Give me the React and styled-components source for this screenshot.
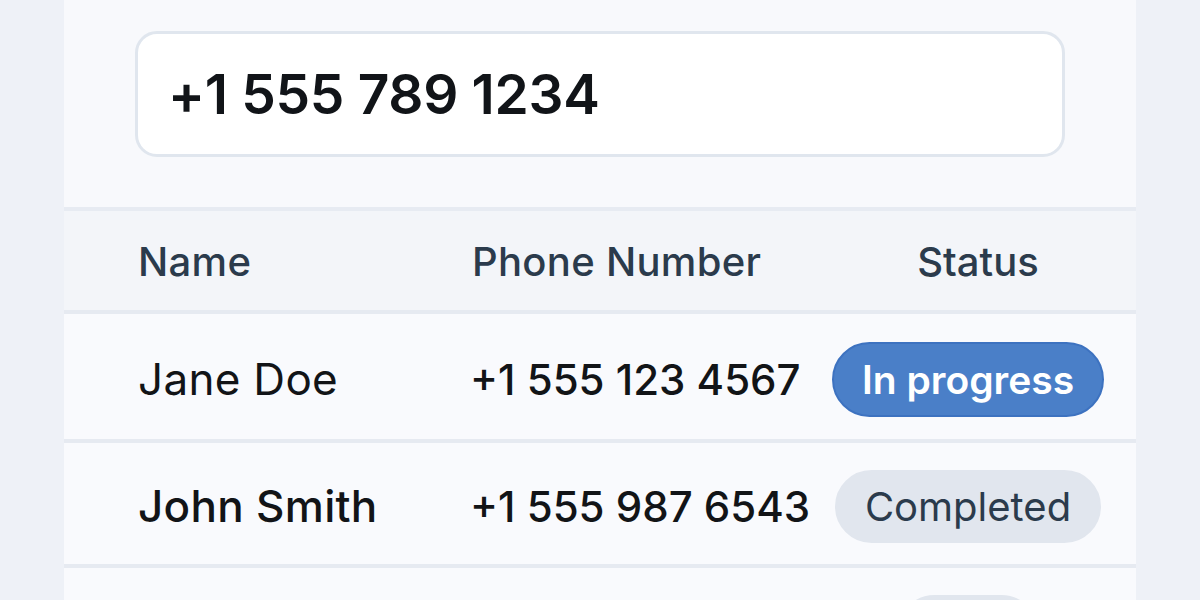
import React from "react";
import styled, { createGlobalStyle } from "styled-components";

const Global = createGlobalStyle`
  html, body { margin: 0; padding: 0; }
  body {
    background: #eef1f7;
    font-family: Inter, "Noto Sans", "Liberation Sans", sans-serif;
    -webkit-font-smoothing: antialiased;
  }
`;

const Page = styled.div`
  height: 600px;
  overflow: hidden;
  padding: 0 64px;
`;

const Card = styled.div`
  background: #f8f9fc;
  display: flex;
  flex-direction: column;
`;

const InputArea = styled.div`
  padding: 31px 71px 50px 71px;
  border-bottom: 4px solid #e7ebf2;
`;

const PhoneInput = styled.div`
  height: 120px;
  box-sizing: content-box;
  border: 3px solid #e0e6ee;
  border-radius: 22px;
  background: #ffffff;
  display: flex;
  align-items: center;
  padding: 0 32px 0 30px;
  font-size: 55px;
  font-weight: 600;
  color: #111418;
  letter-spacing: -0.3px;
`;

const Row = styled.div`
  box-sizing: border-box;
  display: grid;
  grid-template-columns: 334px 358px 276px;
  padding: ${(p) => (p.$header ? 2 : 5)}px 30px 0 74px;
  align-items: center;
  height: ${(p) => p.$h + 4}px;
  background: ${(p) => (p.$header ? "#f3f5f9" : "#f9fafd")};
  border-bottom: 4px solid #e6eaf1;
`;

const HeadCell = styled.div`
  font-size: 40px;
  font-weight: 500;
  color: #2b3b4c;
  white-space: nowrap;
  letter-spacing: ${(p) => (p.$center ? "0" : "0.3px")};
  text-align: ${(p) => (p.$center ? "center" : "left")};
  padding-left: ${(p) => (p.$center ? "20px" : "0")};
`;

const NameCell = styled.div`
  font-size: 44px;
  font-weight: ${(p) => p.$weight};
  color: #121417;
  letter-spacing: 0.3px;
  white-space: nowrap;
`;

const PhoneCell = styled.div`
  font-size: 42px;
  font-weight: 500;
  color: #121417;
  white-space: nowrap;
  margin-left: -2px;
`;

const StatusCell = styled.div`
  display: flex;
  justify-content: center;
`;

const Badge = styled.span`
  display: inline-flex;
  align-items: center;
  justify-content: center;
  box-sizing: border-box;
  white-space: nowrap;
  height: ${(p) => (p.$active ? 75 : 73)}px;
  min-width: 140px;
  padding: 0 28px;
  border-radius: 40px;
  font-size: ${(p) => (p.$active ? 39 : 40)}px;
  font-weight: ${(p) => (p.$active ? 600 : 400)};
  background: ${(p) => (p.$active ? "#4a7fc8" : "#e1e6ee")};
  color: ${(p) => (p.$active ? "#ffffff" : "#2b3b4c")};
  border: 2px solid ${(p) => (p.$active ? "#3d72c0" : "#e1e6ee")};
`;

const rows = [
  { name: "Jane Doe", weight: 400, phone: "+1 555 123 4567", status: "In progress", active: true, h: 125 },
  { name: "John Smith", weight: 500, phone: "+1 555 987 6543", status: "Completed", active: false, h: 121 },
  { name: "", weight: 400, phone: "", status: "", active: false, h: 121 },
];

export default function App() {
  return (
    <>
      <Global />
      <Page>
        <Card>
          <InputArea>
            <PhoneInput>+1 555 789 1234</PhoneInput>
          </InputArea>
          <Row $header $h={99}>
            <HeadCell>Name</HeadCell>
            <HeadCell>Phone Number</HeadCell>
            <HeadCell $center>Status</HeadCell>
          </Row>
          {rows.map((r, i) => (
            <Row key={i} $h={r.h}>
              <NameCell $weight={r.weight}>{r.name}</NameCell>
              <PhoneCell>{r.phone}</PhoneCell>
              <StatusCell>
                <Badge $active={r.active}>{r.status}</Badge>
              </StatusCell>
            </Row>
          ))}
        </Card>
      </Page>
    </>
  );
}
